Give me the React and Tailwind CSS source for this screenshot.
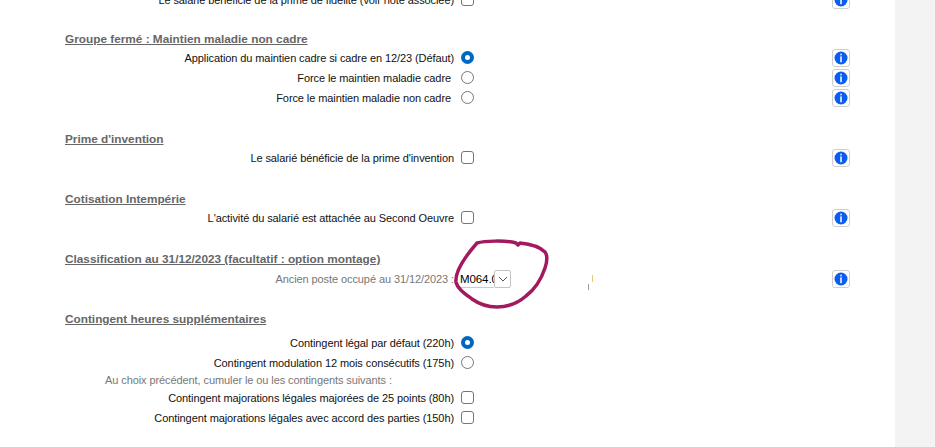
const font = "font-['Liberation_Sans',Arial,sans-serif]";

function InfoButton() {
  return (
    <button className="flex h-[18px] w-[18px] items-center justify-center rounded-[3px] border border-[#cfcfcf] bg-white">
      <svg width="14" height="14" viewBox="0 0 14 14">
        <circle cx="7" cy="7" r="6.5" fill="#0b5cf0" />
        <rect x="6.1" y="2.6" width="1.8" height="1.8" rx="0.9" fill="#d8e6ff" />
        <rect x="6.1" y="5.4" width="1.8" height="5.8" fill="#d8e6ff" />
      </svg>
    </button>
  );
}

function Control({ type, checked }) {
  if (type === "radio") {
    return checked ? (
      <span className="block h-[13px] w-[13px] rounded-full border-[4px] border-[#0067c0] bg-white" />
    ) : (
      <span className="block h-[13px] w-[13px] rounded-full border border-[#767676] bg-white" />
    );
  }
  return <span className="block h-[13px] w-[13px] rounded-[3px] border border-[#767676] bg-white" />;
}

function Row({ label, type, checked, info = true, pad = 0, className = "h-5" }) {
  return (
    <div className={`flex items-center ${className}`}>
      <div className={`w-[389px] whitespace-nowrap pt-px text-right text-[#111] ${pad ? "pr-[3px]" : ""}`}>{label}</div>
      <div className="-mt-px ml-[7px] w-[13px]">
        <Control type={type} checked={checked} />
      </div>
      <div className="ml-[358px] w-[18px]">{info && <InfoButton />}</div>
    </div>
  );
}

function Heading({ children }) {
  return <h3 className="h-5 pt-px text-[11.8px] leading-5 font-bold tracking-normal text-[#666] underline">{children}</h3>;
}

export default function App() {
  return (
    <div className={`relative flex h-[447px] w-[935px] overflow-hidden bg-white text-[11px] tracking-[-0.09px] ${font}`}>
      <div className="w-[895px] pl-[65px]">
        <div className="-mt-[10px] flex flex-col">
          <Row label="Le salarié bénéficie de la prime de fidélité (voir note associée)" type="checkbox" />

          <section className="mt-[18px]">
            <Heading>Groupe fermé : Maintien maladie non cadre</Heading>
            <Row label="Application du maintien cadre si cadre en 12/23 (Défaut)" type="radio" checked />
            <Row label="Force le maintien maladie cadre" type="radio" pad={1} />
            <Row label="Force le maintien maladie non cadre" type="radio" pad={1} />
          </section>

          <section className="mt-5">
            <Heading>Prime d'invention</Heading>
            <Row label="Le salarié bénéficie de la prime d'invention" type="checkbox" />
          </section>

          <section className="mt-5">
            <Heading>Cotisation Intempérie</Heading>
            <Row label="L'activité du salarié est attachée au Second Oeuvre" type="checkbox" />
          </section>

          <section className="mt-5">
            <Heading>Classification au 31/12/2023 (facultatif : option montage)</Heading>
            <div className="mt-px flex h-5 items-center">
              <div className="w-[389px] whitespace-nowrap text-right text-[#777]">Ancien poste occupé au 31/12/2023 :</div>
              <div className="ml-[5px] flex h-[18px] w-[52px] items-center">
                <span className="h-[17px] w-[35px] overflow-hidden border-b border-[#ccc] pl-px text-[11.5px] leading-[17px] text-black">M064.0</span>
                <span className="flex h-[18px] w-[17px] items-center justify-center rounded-[2px] border border-[#c4c4c4]">
                  <svg width="10" height="6" viewBox="0 0 10 6" fill="none" stroke="#555" strokeWidth="1">
                    <path d="M1 1l4 4 4-4" />
                  </svg>
                </span>
              </div>
              <div className="ml-[321px] w-[18px]">
                <InfoButton />
              </div>
            </div>
          </section>

          <section className="mt-[19px]">
            <Heading>Contingent heures supplémentaires</Heading>
            <div className="mt-[5px]">
              <Row label="Contingent légal par défaut (220h)" type="radio" checked info={false} />
              <Row label="Contingent modulation 12 mois consécutifs (175h)" type="radio" info={false} />
            </div>
            <div className="mt-px h-[13px] pl-[40px] leading-[13px] text-[#777]">Au choix précédent, cumuler le ou les contingents suivants :</div>
            <Row label="Contingent majorations légales majorées de 25 points (80h)" type="checkbox" info={false} className="mt-px h-5" />
            <Row label="Contingent majorations légales avec accord des parties (150h)" type="checkbox" info={false} />
          </section>
        </div>
      </div>
      <div className="flex-1 bg-[#f3f3f3]" />

      {/* hand drawn circle on the screenshot */}
      <svg className="absolute top-0 left-0 pointer-events-none" width="935" height="447" fill="none">
        <path
          d="M477 243C484 241 505 240 516 243L518 245L520 243C530 244 540 247 545 252C548 256 547 262 545 268C541 280 534 290 526 296C518 303 508 307 497 307C488 307 479 304 472 299C464 293 457 288 456 282C455 272 463 259 477 243Z"
          stroke="#a3195f"
          strokeWidth="3.5"
          strokeLinecap="round"
          strokeLinejoin="round"
        />
        <path d="M592.5 275v7" stroke="#e8c878" strokeWidth="1" />
        <path d="M588.5 284v6" stroke="#999" strokeWidth="1" />
      </svg>
    </div>
  );
}
